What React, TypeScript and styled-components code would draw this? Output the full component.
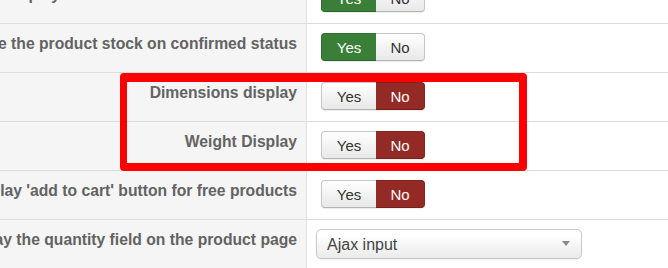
import styled, { createGlobalStyle } from 'styled-components';

const GlobalStyle = createGlobalStyle`
  html, body {
    margin: 0;
    padding: 0;
    background: #ffffff;
  }
  body {
    font-family: 'Liberation Sans', Arial, sans-serif;
    width: 668px;
    height: 268px;
    overflow: hidden;
  }
`;

const Page = styled.div`
  position: relative;
  width: 668px;
  height: 268px;
  overflow: hidden;
`;

const OptionList = styled.div`
  margin-top: -26px;
  display: flex;
  flex-direction: column;
`;

const Row = styled.div`
  display: grid;
  grid-template-columns: 307px 1fr;
  height: 49px;
  border-top: 1px solid #dddddd;
  box-sizing: border-box;
`;

const LabelCell = styled.div`
  display: flex;
  justify-content: flex-end;
  align-items: flex-start;
  overflow: hidden;
  background: #f5f5f5;
  border-right: 1px solid #e0e0e0;
  padding: 10px 9px 0 0;
`;

const Label = styled.span`
  flex-shrink: 0;
  white-space: nowrap;
  font-size: 15.7px;
  line-height: 20px;
  font-weight: bold;
  color: #636363;
`;

const ControlCell = styled.div`
  display: flex;
  align-items: flex-start;
  padding: 9px 0 0 9px;
  background: #ffffff;
`;

const Toggle = styled.div`
  display: flex;
  margin-left: 5px;
  height: 28px;
  border-radius: 4px;
  box-shadow: 0 1px 1px rgba(0, 0, 0, 0.08);
`;

const ToggleButton = styled.span<{ $active?: 'yes' | 'no'; $side: 'left' | 'right' }>`
  display: flex;
  align-items: center;
  justify-content: center;
  box-sizing: border-box;
  width: ${(p) => (p.$side === 'left' ? '55px' : '49px')};
  height: 28px;
  padding-top: 1px;
  font-size: 15px;
  color: ${(p) => (p.$active ? '#ffffff' : '#333333')};
  border: 1px solid ${(p) =>
    p.$active === 'yes' ? '#2f7030' : p.$active === 'no' ? '#83241f' : '#c6c6c6'};
  border-bottom-color: ${(p) =>
    p.$active === 'yes' ? '#2b662b' : p.$active === 'no' ? '#781f1b' : '#b3b3b3'};
  ${(p) => (p.$side === 'left' ? 'border-right: none;' : 'border-left: none;')}
  border-radius: ${(p) => (p.$side === 'left' ? '4px 0 0 4px' : '0 4px 4px 0')};
  background: ${(p) =>
    p.$active === 'yes'
      ? '#3a7f37'
      : p.$active === 'no'
      ? '#932a25'
      : 'linear-gradient(to bottom, #ffffff, #e8e8e8)'};
`;

const Select = styled.div`
  display: flex;
  align-items: center;
  justify-content: space-between;
  box-sizing: border-box;
  width: 266px;
  height: 30px;
  padding: 1px 11px 0 10px;
  border: 1px solid #c8c8c8;
  border-radius: 5px;
  background: linear-gradient(to bottom, #ffffff 20%, #f4f4f4 60%, #ebebeb 100%);
  box-shadow: 0 1px 2px rgba(0, 0, 0, 0.06);
  font-size: 16px;
  color: #444444;
`;

const Caret = styled.span`
  width: 0;
  height: 0;
  border-left: 4px solid transparent;
  border-right: 4px solid transparent;
  border-top: 5px solid #8a8a8a;
  margin-top: -2px;
`;

const Highlight = styled.div`
  position: absolute;
  left: 120px;
  top: 73px;
  width: 407px;
  height: 98px;
  box-sizing: border-box;
  border: 8px solid #ff0000;
  border-top-width: 9px;
  border-left-width: 7px;
  border-radius: 4px;
  pointer-events: none;
`;

type Value = 'yes' | 'no';

interface IOption {
  label: string;
  value?: Value;
  select?: string;
}

const options: IOption[] = [
  { label: 'Product stock display for all out of stock items in cart', value: 'yes' },
  { label: 'Update the product stock on confirmed status', value: 'yes' },
  { label: 'Dimensions display', value: 'no' },
  { label: 'Weight Display', value: 'no' },
  { label: "Display 'add to cart' button for free products", value: 'no' },
  { label: 'Display the quantity field on the product page', select: 'Ajax input' },
];

const YesNo = ({ value }: { value: Value }) => (
  <Toggle>
    <ToggleButton $side="left" $active={value === 'yes' ? 'yes' : undefined}>
      Yes
    </ToggleButton>
    <ToggleButton $side="right" $active={value === 'no' ? 'no' : undefined}>
      No
    </ToggleButton>
  </Toggle>
);

const App = () => {
  return (
    <Page>
      <GlobalStyle />
      <OptionList>
        {options.map((o) => (
          <Row key={o.label}>
            <LabelCell>
              <Label>{o.label}</Label>
            </LabelCell>
            <ControlCell>
              {o.select ? (
                <Select>
                  <span>{o.select}</span>
                  <Caret />
                </Select>
              ) : (
                <YesNo value={o.value as Value} />
              )}
            </ControlCell>
          </Row>
        ))}
      </OptionList>
      <Highlight />
    </Page>
  );
};

export default App;
